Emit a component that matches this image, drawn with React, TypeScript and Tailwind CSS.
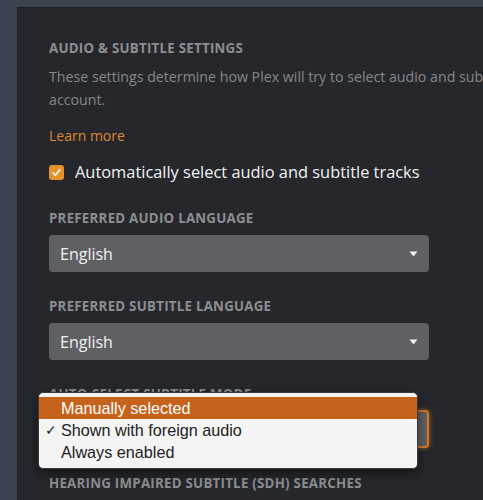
import React from 'react';

const Caret = () => (
  <svg width="9" height="6" viewBox="0 0 9 6" className="shrink-0">
    <path d="M0.5 0.5 H8.5 L4.5 5.5 Z" fill="#f2f2f2" />
  </svg>
);

const Label: React.FC<{ children: React.ReactNode }> = ({ children }) => (
  <div className="h-[18px] leading-[18px] text-[13.3px] font-bold uppercase tracking-[0.25px] text-[#8d8e91]">
    {children}
  </div>
);

const Select: React.FC<{ value: string; focused?: boolean }> = ({ value, focused }) => (
  <div
    className={
      focused
        ? 'mt-[7px] h-[38px] w-[380px] rounded-[4px] bg-[#5f6064] border-2 border-[#d9782a] shadow-[0_0_4px_1px_rgba(217,120,42,0.55)] flex items-center justify-between pl-[10px] pr-[10px]'
        : 'mt-[8px] h-[37px] w-[380px] rounded-[4px] bg-[#5f6064] flex items-center justify-between pl-[11px] pr-[11px]'
    }
  >
    <span className="text-[16px] text-[#f1f1f1]">{value}</span>
    <Caret />
  </div>
);

export default function App() {
  return (
    <div className="w-[483px] h-[500px] overflow-hidden bg-[#3b4350] pl-[17px] pt-[7px] font-['Open_Sans',sans-serif]">
      <div className="h-full bg-[#25272c] border-t border-l border-[#1d1f23] pl-[31px] pt-[31px]">
        <Label>Audio &amp; Subtitle Settings</Label>
        <div className="mt-[8px] text-[14.2px] leading-[23px] text-[#85878b]">
          <div className="whitespace-nowrap">These settings determine how Plex will try to select audio and subtitle tracks for your</div>
          <div>account.</div>
        </div>
        <div className="mt-[13px] text-[14px] leading-[23px] text-[#df8a2c]">Learn more</div>

        <label className="mt-[13px] h-[24px] flex items-center gap-[11px]">
          <span className="w-[15px] h-[15px] rounded-[3px] bg-[#e5922a] flex items-center justify-center">
            <svg width="11" height="11" viewBox="0 0 11 11">
              <path d="M2 5.8 L4.4 8.3 L9 2.6" fill="none" stroke="#fff" strokeWidth="1.6" strokeLinecap="round" strokeLinejoin="round" />
            </svg>
          </span>
          <span className="text-[16.4px] font-medium text-[#f2f2f2]">Automatically select audio and subtitle tracks</span>
        </label>

        <div className="mt-[25px]">
          <Label>Preferred Audio Language</Label>
          <Select value="English" />
        </div>

        <div className="mt-[25px]">
          <Label>Preferred Subtitle Language</Label>
          <Select value="English" />
        </div>

        <div className="mt-[25px] relative">
          <Label>Auto-Select Subtitle Mode</Label>
          <Select value="Shown with foreign audio" focused />

          <div className="absolute left-[-11px] top-[7px] w-[380px] rounded-[5px] border border-[#3a3a3a] bg-[#f4f4f4] pt-[4px] pb-[5px] shadow-[0_4px_12px_rgba(0,0,0,0.5)] font-['Liberation_Sans',sans-serif] text-[16.2px]">
            <div className="h-[22px] bg-[#c6621c] text-white flex items-center pl-[22px]">Manually selected</div>
            <div className="h-[22px] text-[#222] flex items-center relative pl-[22px]">
              <span className="absolute left-[6px] text-[14px]">✓</span>
              Shown with foreign audio
            </div>
            <div className="h-[22px] text-[#222] flex items-center pl-[22px]">Always enabled</div>
          </div>
        </div>

        <div className="mt-[26px]">
          <Label>Hearing Impaired Subtitle (SDH) Searches</Label>
          <Select value="Prefer non-SDH subtitles" />
        </div>
      </div>
    </div>
  );
}
